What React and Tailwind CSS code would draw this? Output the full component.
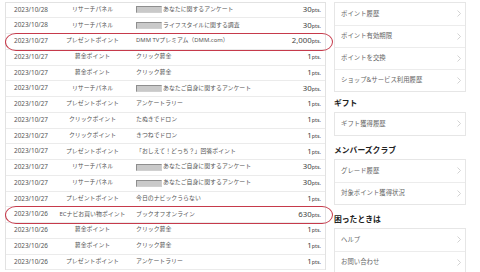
import React from 'react';

const rows = [
  ['2023/10/28', 'リサーチパネル', 'あなたに関するアンケート', '30', true],
  ['2023/10/28', 'リサーチパネル', 'ライフスタイルに関する調査', '30', true],
  ['2023/10/27', 'プレゼントポイント', 'DMM TVプレミアム（DMM.com）', '2,000', false],
  ['2023/10/27', '募金ポイント', 'クリック募金', '1', false],
  ['2023/10/27', '募金ポイント', 'クリック募金', '1', false],
  ['2023/10/27', 'リサーチパネル', 'あなたご自身に関するアンケート', '30', true],
  ['2023/10/27', 'プレゼントポイント', 'アンケートラリー', '1', false],
  ['2023/10/27', 'クリックポイント', 'たぬきでドロン', '1', false],
  ['2023/10/27', 'クリックポイント', 'きつねでドロン', '1', false],
  ['2023/10/27', 'プレゼントポイント', '「おしえて！どっち？」回答ポイント', '1', false],
  ['2023/10/27', 'リサーチパネル', 'あなたご自身に関するアンケート', '30', true],
  ['2023/10/27', 'リサーチパネル', 'あなたご自身に関するアンケート', '30', true],
  ['2023/10/27', 'プレゼントポイント', '今日のナビックうらない', '1', false],
  ['2023/10/26', 'ECナビお買い物ポイント', 'ブックオフオンライン', '630', false],
  ['2023/10/26', '募金ポイント', 'クリック募金', '1', false],
  ['2023/10/26', '募金ポイント', 'クリック募金', '1', false],
  ['2023/10/26', 'プレゼントポイント', 'アンケートラリー', '1', false],
];

const sections = [
  { title: null, items: ['ポイント履歴', 'ポイント有効期限', 'ポイントを交換', 'ショップ&サービス利用履歴'] },
  { title: 'ギフト', items: ['ギフト獲得履歴'] },
  { title: 'メンバーズクラブ', items: ['グレード履歴', '対象ポイント獲得状況'] },
  { title: '困ったときは', items: ['ヘルプ', 'お問い合わせ'] },
];

const font = { fontFamily: '"Noto Sans", "Noto Sans CJK JP", sans-serif' };

const Chevron = () => (
  <svg width="4" height="7" viewBox="0 0 4 7" className="shrink-0">
    <path d="M0.5 0.5 L3.5 3.5 L0.5 6.5" fill="none" stroke="#c8c8c8" strokeWidth="0.8" />
  </svg>
);

export default function App() {
  return (
    <div className="relative w-[480px] h-[272px] overflow-hidden bg-white flex text-[#555]" style={font}>
      {/* history table */}
      <div className="ml-[5px] mt-[1.5px] w-[321px] self-start border-t border-x border-[#e2e2e2]">
        {rows.map(([date, type, detail, pts, masked], i) => (
          <div key={i} className="flex items-center h-[15.75px] border-b border-[#ebebeb] text-[6px] leading-none">
            <div className="w-[50px] text-center text-[6.4px]">{date}</div>
            <div className="w-[73px] text-center text-[5.9px] whitespace-nowrap">{type}</div>
            <div className="flex-1 pl-[7px] flex items-center text-[5.9px] whitespace-nowrap">
              {masked && (
                <span className="inline-block w-[26px] h-[7px] bg-[#c9c9c9] border border-[#8e8e8e] border-r-[#d0d0d0] border-b-[#d0d0d0] mr-[1px]" />
              )}
              {detail}
            </div>
            <div className="pr-[4px] flex items-baseline whitespace-nowrap text-[#444]">
              <span className="text-[7.8px]">{pts}</span>
              <span className="text-[5.4px]">pts.</span>
            </div>
          </div>
        ))}
      </div>

      {/* side menu */}
      <div className="ml-[8px] w-[132px] pt-[1.75px]">
        {sections.map((s, i) => (
          <div key={i}>
            {s.title && (
              <div className={`${i === 1 ? 'mt-[5px]' : 'mt-[8px]'} mb-[1px] h-[14px] flex items-center text-[7.8px] font-bold text-[#222]`}>
                {s.title}
              </div>
            )}
            <div className="border border-[#e6e6e6] bg-white">
              {s.items.map((it, j) => (
                <div
                  key={j}
                  className={`flex items-center justify-between h-[22px] pl-[6px] pr-[4px] text-[6.4px] text-[#666] ${j > 0 ? 'border-t border-[#ececec]' : ''}`}
                >
                  <span className="whitespace-nowrap">{it}</span>
                  <Chevron />
                </div>
              ))}
            </div>
          </div>
        ))}
      </div>

      {/* red annotation marks */}
      <div className="absolute left-[5px] top-[33px] w-[328px] h-[18px] border border-[#c63a4b] rounded-[11px/9px]" />
      <div className="absolute left-[5px] top-[206px] w-[328px] h-[18px] border border-[#c63a4b] rounded-[11px/9px]" />
    </div>
  );
}
